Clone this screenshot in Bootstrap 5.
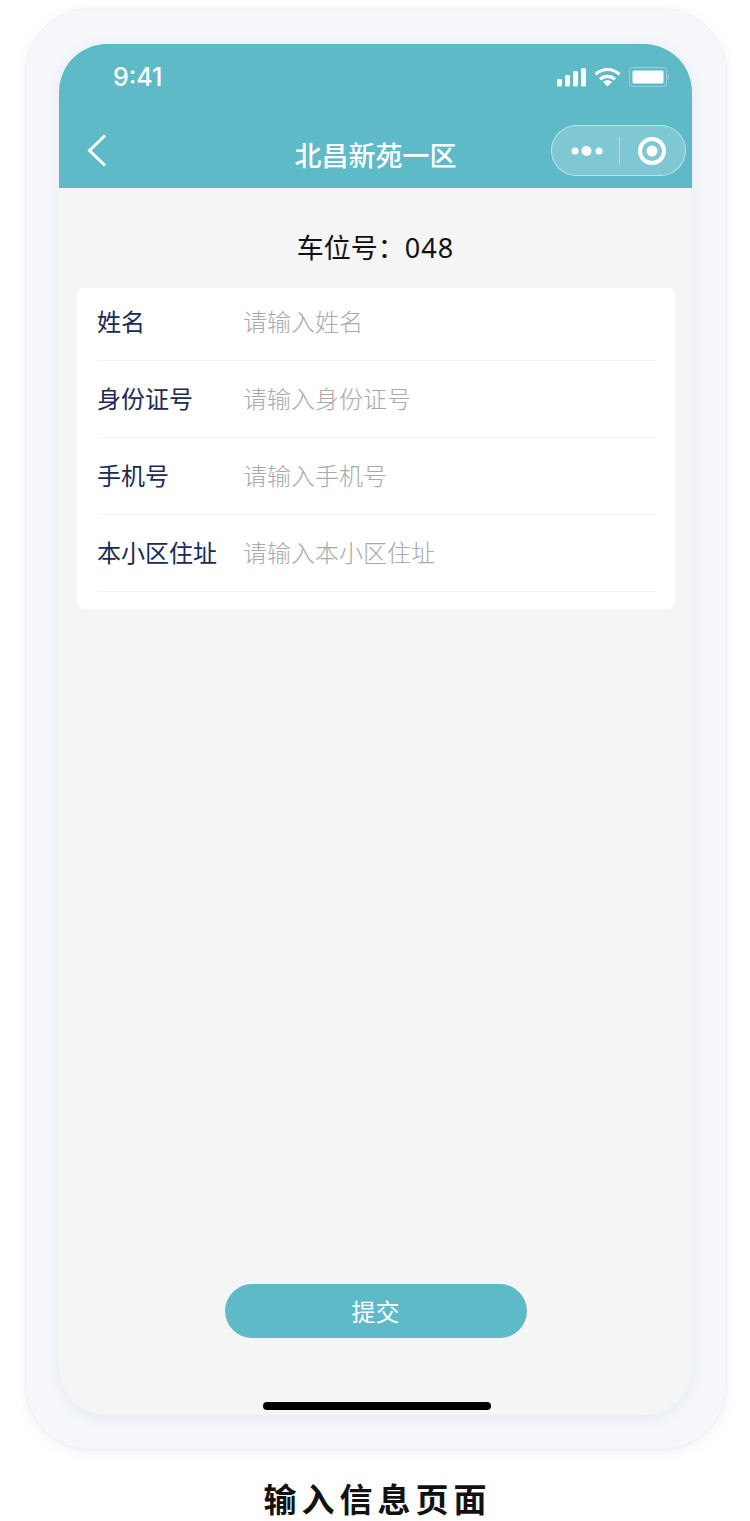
<!DOCTYPE html>
<html lang="zh-CN">
<head>
  <meta charset="UTF-8" />
  <meta name="viewport" content="width=device-width, initial-scale=1" />
  <title>输入信息页面</title>
  <link href="https://cdn.jsdelivr.net/npm/bootstrap@5.3.3/dist/css/bootstrap.min.css" rel="stylesheet" />
  <style>
    body {
      background: #fff;
      font-family: "Liberation Sans", "Noto Sans CJK SC", sans-serif;
      width: 750px;
      height: 1521px;
      overflow: hidden;
    }

    .phone-frame {
      width: 700px;
      height: 1440px;
      margin: 9px 0 0 26px;
      padding: 35px 34px 34px 33px;
      background: #f5f7fa;
      border-radius: 64px;
      box-shadow: 0 3px 12px rgba(175, 185, 210, 0.22), 0 0 2px rgba(175, 185, 210, 0.3);
    }

    .phone-screen {
      height: 1371px;
      background: #f5f5f6;
      border-radius: 48px;
      overflow: hidden;
      box-shadow: 0 3px 14px rgba(190, 200, 222, 0.28);
    }

    .top-bar {
      background: #5fbac8;
      height: 144px;
      color: #fff;
    }

    .status-row {
      height: 81px;
      padding: 21px 23px 0 54px;
    }

    .status-icons {
      margin-top: 2px;
    }

    .status-time {
      font-family: Inter, "Liberation Sans", sans-serif;
      font-size: 25px;
      font-weight: 500;
      line-height: 24px;
    }

    .nav-row {
      display: grid;
      grid-template-columns: 1fr auto 1fr;
      align-items: center;
      padding: 0 6px;
      height: 51px;
    }

    .back-btn {
      margin-left: 22px;
    }

    .nav-title {
      font-family: "Noto Sans CJK SC", sans-serif;
      font-size: 27px;
      font-weight: 500;
      line-height: 36px;
      margin-top: 8px;
    }

    .capsule {
      width: 135px;
      height: 51px;
      border: 1px solid rgba(255, 255, 255, 0.5);
      border-radius: 26px;
      background: rgba(255, 255, 255, 0.2);
    }

    .capsule-dots {
      margin-left: 19px;
    }

    .capsule-line {
      width: 1px;
      height: 27px;
      margin: 0 18px 0 16px;
      background: rgba(255, 255, 255, 0.4);
    }

    .spot-title {
      font-family: "Noto Sans", "Noto Sans CJK SC", sans-serif;
      font-size: 27px;
      line-height: 36px;
      color: #111;
      padding: 42px 0 22px;
    }

    .spot-number {
      letter-spacing: 1px;
    }

    .info-panel {
      margin: 0 17px 0 18px;
      height: 321px;
      padding: 0 19px 0 20px;
      background: #fff;
      border-radius: 7px;
    }

    .info-row {
      height: 77px;
      padding-bottom: 2px;
      border-bottom: 1px solid #f3f3f4;
    }

    .info-row:first-child {
      height: 73px;
      padding-bottom: 6px;
    }

    .info-label {
      width: 146px;
      flex: none;
      font-family: "Noto Sans CJK SC", sans-serif;
      font-size: 24px;
      color: #1b2a55;
    }

    .info-input.form-control {
      padding: 0;
      border: 0;
      border-radius: 0;
      box-shadow: none;
      background: transparent;
      font-family: "Noto Sans CJK SC", sans-serif;
      font-size: 24px;
      font-weight: 300;
      line-height: 34px;
      color: #333;
    }

    .info-input::placeholder {
      color: #a9a9ac;
      opacity: 1;
    }

    .submit-btn.btn {
      width: 302px;
      height: 54px;
      padding: 0;
      background: #5fbac8;
      border: 0;
      border-radius: 27px;
      color: #fff;
      font-family: "Noto Sans CJK SC", sans-serif;
      font-size: 24px;
      font-weight: 400;
    }

    .home-bar {
      width: 228px;
      height: 8px;
      margin: 64px 0 5px 204px;
      background: #000;
      border-radius: 4px;
    }

    .page-caption {
      margin-top: 28px;
      padding-left: 5px;
      font-family: "Noto Sans CJK SC", sans-serif;
      font-size: 33px;
      font-weight: 700;
      line-height: 42px;
      letter-spacing: 5px;
      color: #111;
    }
  </style>
</head>
<body>

  <div class="phone-frame">
    <div class="phone-screen d-flex flex-column">

      <header class="top-bar">
        <div class="status-row d-flex justify-content-between align-items-start">
          <span class="status-time">9:41</span>
          <div class="status-icons d-flex align-items-center gap-2">
            <!-- signal -->
            <svg width="30" height="20" viewBox="0 0 30 20" fill="#fff">
              <rect x="1" y="12" width="5" height="7.500" rx="1.500" />
              <rect x="9" y="8" width="5" height="11.500" rx="1.500" />
              <rect x="17" y="4" width="5" height="15.500" rx="1.500" />
              <rect x="25" y="1" width="5" height="18.500" rx="1.500" />
            </svg>
            <!-- wifi -->
            <svg width="27" height="20" viewBox="0 0 27 20" fill="none" stroke="#fff" stroke-width="3.200">
              <path d="M1.500 7.500C8 .8 19 .8 25.500 7.500" />
              <path d="M6 12.300c4.200-4 10.800-4 15 0" />
              <path d="M13.500 19.500l-4.500-4.500c2.200-2.200 6.800-2.200 9 0z" fill="#fff" stroke="none" />
            </svg>
            <!-- battery -->
            <svg width="40" height="20" viewBox="0 0 40 20" fill="none">
              <rect x="0.500" y="0.500" width="37" height="19" rx="3.500" stroke="#fff" stroke-opacity="0.35" />
              <rect x="3.500" y="3.500" width="31" height="13" rx="1.500" fill="#fff" />
              <path d="M39 7c1 .6 1 5.400 0 6z" fill="#fff" fill-opacity="0.5" />
            </svg>
          </div>
        </div>
        <nav class="nav-row">
          <a class="back-btn d-block lh-1" href="#" aria-label="返回">
            <svg width="20" height="33" viewBox="0 0 20 33" fill="none" stroke="#fff" stroke-width="3">
              <path d="M18 1.500L2.500 16.500 18 31.500" />
            </svg>
          </a>
          <div class="nav-title text-center">北昌新苑一区</div>
          <div class="capsule d-flex align-items-center ms-auto">
            <svg class="capsule-dots" width="32" height="12" viewBox="0 0 32 12" fill="#fff">
              <circle cx="4" cy="6" r="3.500" />
              <circle cx="15.500" cy="6" r="5" />
              <circle cx="28" cy="6" r="3.500" />
            </svg>
            <span class="capsule-line"></span>
            <svg width="28" height="28" viewBox="0 0 28 28" fill="none">
              <circle cx="14" cy="14" r="12" stroke="#fff" stroke-width="4" />
              <circle cx="14" cy="14" r="5.500" fill="#fff" />
            </svg>
          </div>
        </nav>
      </header>

      <div class="spot-title text-center">车位号：<span class="spot-number">048</span></div>

      <form class="info-panel">
        <div class="info-row d-flex align-items-center">
          <label class="info-label" for="userName">姓名</label>
          <input class="info-input form-control" id="userName" type="text" placeholder="请输入姓名" />
        </div>
        <div class="info-row d-flex align-items-center">
          <label class="info-label" for="idNumber">身份证号</label>
          <input class="info-input form-control" id="idNumber" type="text" placeholder="请输入身份证号" />
        </div>
        <div class="info-row d-flex align-items-center">
          <label class="info-label" for="phone">手机号</label>
          <input class="info-input form-control" id="phone" type="text" placeholder="请输入手机号" />
        </div>
        <div class="info-row d-flex align-items-center">
          <label class="info-label" for="address">本小区住址</label>
          <input class="info-input form-control" id="address" type="text" placeholder="请输入本小区住址" />
        </div>
      </form>

      <div class="text-center mt-auto">
        <button class="submit-btn btn" type="button">提交</button>
      </div>
      <div class="home-bar"></div>
    </div>
  </div>

  <div class="page-caption text-center">输入信息页面</div>

<script src="https://cdn.jsdelivr.net/npm/bootstrap@5.3.3/dist/js/bootstrap.bundle.min.js"></script>
</body>
</html>
